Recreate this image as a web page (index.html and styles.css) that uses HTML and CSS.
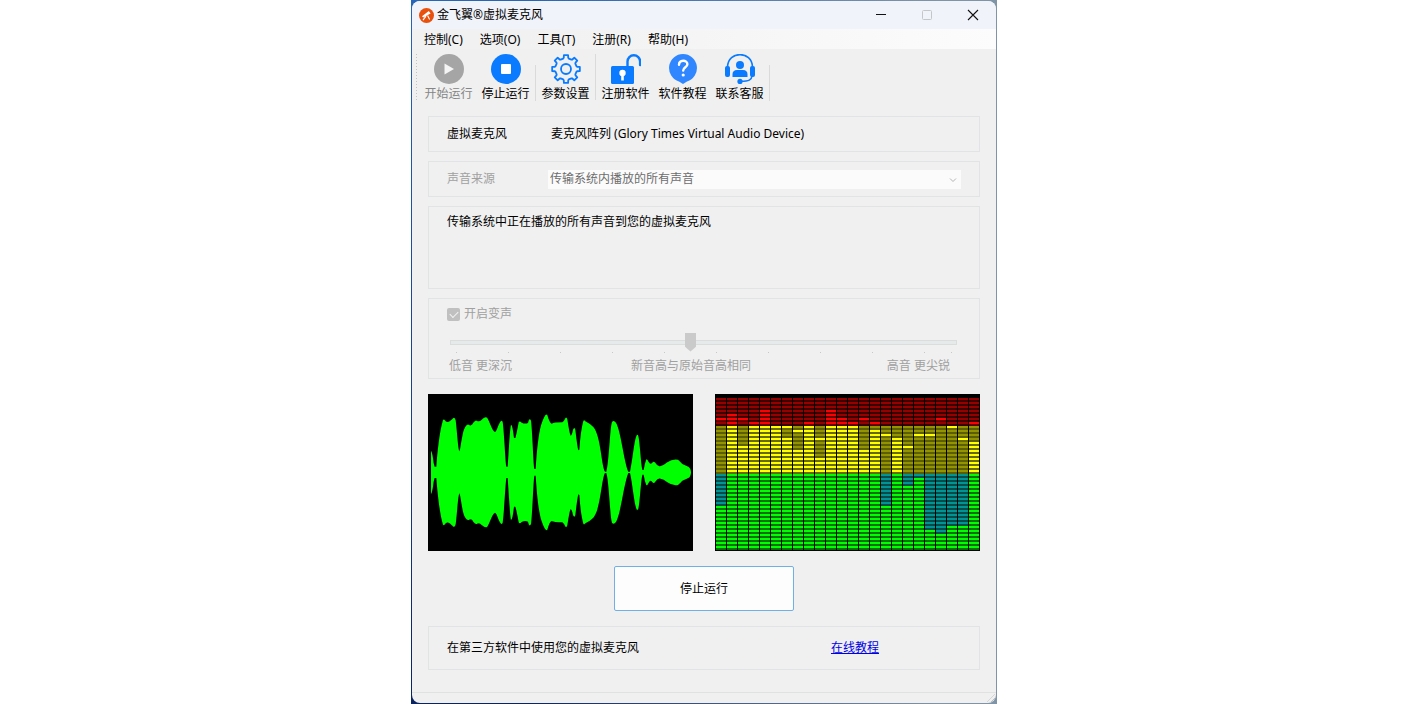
FILE: index.html
```html
<!DOCTYPE html>
<html lang="zh-CN">
<head>
    <meta charset="UTF-8">
    <meta name="viewport" content="width=device-width, initial-scale=1.0">
    <title>金飞翼®虚拟麦克风</title>
    <link rel="stylesheet" href="styles.css">
</head>
<body>
    <div class="desktop">
        <div class="window">
            <header class="title-bar">
                <svg class="app-icon" viewBox="0 0 15 15" aria-hidden="true">
                    <circle cx="7.5" cy="7.5" r="7.5" fill="#e8500c"/>
                    <path d="M3 8.200 9.800 3l1.800 2.600L4.200 9.400z" fill="#fff"/>
                    <path d="M7 8.200 4 12.200M8.600 7.400l2 4" stroke="#fff" stroke-width="1.1" fill="none"/>
                </svg>
                <h1>金飞翼®虚拟麦克风</h1>
                <div class="window-controls">
                    <button type="button" aria-label="最小化">
                        <svg viewBox="0 0 12 12"><path d="M1 5.500h10" stroke="#111"/></svg>
                    </button>
                    <button type="button" aria-label="最大化" disabled>
                        <svg viewBox="0 0 12 12"><rect x="1.5" y="1.5" width="9" height="9" rx="1" fill="none" stroke="#c4c6ca"/></svg>
                    </button>
                    <button type="button" aria-label="关闭">
                        <svg viewBox="0 0 12 12"><path d="M1 1l10 10M11 1 1 11" stroke="#111" stroke-width="1.1"/></svg>
                    </button>
                </div>
            </header>

            <nav class="menu-bar">
                <button type="button">控制(C)</button>
                <button type="button">选项(O)</button>
                <button type="button">工具(T)</button>
                <button type="button">注册(R)</button>
                <button type="button">帮助(H)</button>
            </nav>

            <div class="toolbar">
                <span class="grip"></span>
                <button type="button" disabled>
                    <svg viewBox="0 0 30 30">
                        <circle cx="15" cy="15" r="15" fill="#a5a5a5"/>
                        <path d="M10.5 9.5v11l9.5-5.5z" fill="#f4f4f4"/>
                    </svg>
                    开始运行
                </button>
                <button type="button">
                    <svg viewBox="0 0 30 30">
                        <circle cx="15" cy="15" r="15" fill="#0a7bff"/>
                        <rect x="10" y="10" width="10" height="10" rx="1" fill="#fff"/>
                    </svg>
                    停止运行
                </button>
                <span class="separator short"></span>
                <button type="button">
                    <svg viewBox="0 0 30 30" fill="none" stroke="#0a7bff" stroke-width="1.8">
                        <path id="gear" stroke-linejoin="round"/>
                        <circle cx="15" cy="15" r="5"/>
                    </svg>
                    参数设置
                </button>
                <span class="separator"></span>
                <button type="button">
                    <svg viewBox="0 0 30 30">
                        <rect x="0" y="12" width="23" height="18" rx="1.5" fill="#0a7bff"/>
                        <path d="M16.5 12V7.5a6.3 6.3 0 0 1 12.6 0V11" fill="none" stroke="#0a7bff" stroke-width="2.4" stroke-linecap="round"/>
                        <circle cx="11.5" cy="19" r="3.2" fill="#fff"/>
                        <path d="M10.2 20h2.6v6.5h-2.6z" fill="#fff"/>
                    </svg>
                    注册软件
                </button>
                <button type="button">
                    <svg viewBox="0 0 30 30">
                        <path d="M15 0a14 14 0 0 1 4 27.4L15 30l-4-2.6A14 14 0 0 1 15 0z" fill="#2f86ff"/>
                        <path d="M11 10.800c0-5.400 8.400-5.200 8.400-.6 0 3-4.200 3.200-4.200 6.400" fill="none" stroke="#fff" stroke-width="2.4" stroke-linecap="round"/>
                        <circle cx="15.2" cy="21" r="1.6" fill="#fff"/>
                    </svg>
                    软件教程
                </button>
                <button type="button">
                    <svg viewBox="0 0 30 30" fill="#0a7bff">
                        <path d="M2.500 13C3 -3.500 27 -3.500 27.500 13M27 22c-.5 4-3 5.300-11 5.300" fill="none" stroke="#0a7bff" stroke-width="1.600"/>
                        <rect x="0" y="12" width="5" height="11" rx="2"/>
                        <rect x="25" y="12" width="5" height="11" rx="2"/>
                        <circle cx="15" cy="11" r="4"/>
                        <path d="M7.500 23v-2.500q0-4.500 4.500-4.500h6q4.500 0 4.500 4.500V23z"/>
                        <circle cx="15" cy="27.400" r="2.600"/>
                    </svg>
                    联系客服
                </button>
                <span class="separator short"></span>
            </div>

            <main class="content">
                <section class="group row">
                    <span class="row-label">虚拟麦克风</span>
                    <span class="device">麦克风阵列 (Glory Times Virtual Audio Device)</span>
                </section>

                <section class="group row">
                    <label class="row-label muted" for="source">声音来源</label>
                    <div class="select-wrap">
                        <select id="source" disabled>
                            <option>传输系统内播放的所有声音</option>
                        </select>
                        <svg class="chevron" viewBox="0 0 8 8"><path d="M1 2.500l3 3 3-3" fill="none" stroke="#b4b4b4"/></svg>
                    </div>
                </section>

                <section class="group description">
                    <p>传输系统中正在播放的所有声音到您的虚拟麦克风</p>
                </section>

                <section class="group pitch">
                    <label class="check">
                        <input type="checkbox" checked disabled>
                        开启变声
                    </label>
                    <input class="slider" type="range" min="0" max="19" value="9" disabled aria-label="音高">
                    <div class="ticks"></div>
                    <div class="pitch-labels">
                        <span>低音 更深沉</span>
                        <span>新音高与原始音高相同</span>
                        <span class="high">高音 更尖锐</span>
                    </div>
                </section>

                <section class="meters">
                    <svg class="meter" viewBox="12 11 795 471" preserveAspectRatio="none" role="img" aria-label="波形">
                        <path id="wave" fill="#0f0" d="M21 247V181Q25 185 29 218L32 229H37C40 190 46 125 57 89Q60 85 64 92 70 98 77 93L86 85Q92 78 95 90C99 120 102 175 106 183 110 178 114 130 121 115Q128 101 134 103 140 108 145 102 153 89 158 91 166 96 173 88 185 77 190 83C196 92 205 123 213 125Q217 124 222 108 232 83 236 95C240 120 244 210 247 229H251C254 190 258 110 261 104Q265 100 270 143H274Q278 130 284 96 287 90 293 97 303 102 312 98 316 80 321 91C325 120 328 220 331 236H335C338 190 343 130 352 102Q364 66 370 74 377 99 383 100 390 96 415 96 420 92 425 82 428 80 430 87 437 134 440 136 444 134 447 118 451 108 454 118 460 170 463 180L466 178Q470 120 478 92 480 87 484 93 498 100 508 110C530 135 532 225 543 244H547C555 220 558 110 564 95Q569 88 576 97C590 120 600 215 613 244H618C625 215 630 155 637 137Q640 130 643 137C648 160 650 215 655 239H659Q662 220 667 207 671 207 674 215 679 224 684 218 690 210 695 219 701 230 710 227 718 226 730 216 745 205 762 208 770 215 775 221L793 229Q801 233 801 247Z"/>
                        <use href="#wave" transform="matrix(1 0 0 -1 0 492)"/>
                    </svg>
                    <canvas class="meter" id="spectrum" width="265" height="157" role="img" aria-label="频谱"></canvas>
                </section>

                <button class="stop-btn" type="button">停止运行</button>

                <section class="group footer-row">
                    <span>在第三方软件中使用您的虚拟麦克风</span>
                    <a href="#">在线教程</a>
                </section>
            </main>

            <footer class="status-bar">
                <span class="resize-grip"></span>
            </footer>
        </div>
    </div>

    <script src="script.js"></script>
</body>
</html>
```
FILE: styles.css
```css
:root {
    --face: #f0f0f0;
    --line: #e1e3e4;
    --muted: #a0a0a0;
}

* {
    margin: 0;
    padding: 0;
    box-sizing: border-box;
}

body {
    font-family: 'Noto Sans', 'Noto Sans CJK SC', sans-serif;
    font-size: 12px;
    line-height: 18px;
    color: #000;
    background: #fff;
}

button,
select,
input {
    font: inherit;
    color: inherit;
    border: none;
    background: none;
}

/* strip of wallpaper showing round the window corners */
.desktop {
    max-width: 586px;
    min-height: 100vh;
    margin: 0 auto;
    padding: 1px;
    display: flex;
    background: linear-gradient(90deg, rgba(128, 148, 168, 0) 20%, #8094a8 90%), linear-gradient(#2766b4, #0b2460);
}

.window {
    flex: 1;
    display: flex;
    flex-direction: column;
    background: var(--face);
    border-radius: 8px;
    overflow: hidden;
}

.title-bar {
    display: flex;
    align-items: center;
    height: 28px;
    padding-left: 7px;
    background: #f0f3f9;
}

.app-icon {
    width: 15px;
    height: 15px;
    margin-right: 3px;
}

.title-bar h1 {
    font-size: 12px;
    font-weight: 400;
}

.window-controls {
    display: flex;
    margin-left: auto;
}

.window-controls button {
    width: 46px;
    height: 28px;
}

.window-controls svg {
    width: 12px;
    height: 12px;
    display: block;
    margin: 0 auto;
}

.menu-bar {
    display: flex;
    gap: 17px;
    height: 20px;
    padding: 2px 0 0 12px;
    background: linear-gradient(90deg, #f1f1f1 20%, #fcfcfc);
}

.toolbar {
    display: flex;
    height: 55px;
    padding-top: 5px;
}

.grip {
    width: 8px;
    height: 46px;
    background: repeating-linear-gradient(#c4c4c4 0 1px, transparent 1px 3px) 4px 0 / 1px 100% no-repeat;
}

.toolbar button {
    width: 57px;
    display: flex;
    flex-direction: column;
    align-items: center;
    gap: 1px;
    white-space: nowrap;
}

.toolbar button:disabled {
    color: #858585;
}

.toolbar svg {
    width: 30px;
    height: 30px;
}

.separator {
    width: 3px;
    height: 46px;
    background: linear-gradient(#dadada, #dadada) 1px 0 / 1px 100% no-repeat;
}

.separator.short {
    height: 36px;
    margin-top: 11px;
}

.content {
    flex: 1;
    display: flex;
    flex-direction: column;
    gap: 9px;
    padding: 12px 16px 0;
}

.group {
    border: 1px solid var(--line);
    padding: 0 18px;
}

.row {
    display: flex;
    align-items: center;
    height: 36px;
}

.row-label {
    width: 101px;
}

.device {
    padding-left: 3px;
}

.muted {
    color: var(--muted);
}

.select-wrap {
    flex: 1;
    position: relative;
}

.select-wrap select {
    display: block;
    width: 100%;
    height: 19px;
    padding-left: 2px;
    appearance: none;
    background: #fbfbfb;
    color: #6d6d6d;
    opacity: 1;
}

.chevron {
    position: absolute;
    right: 4px;
    top: 6px;
    width: 8px;
    height: 8px;
}

.description {
    min-height: 83px;
    padding-top: 6px;
}

.pitch {
    min-height: 81px;
    padding-top: 6px;
    color: var(--muted);
}

.check {
    display: flex;
    align-items: center;
    gap: 4px;
}

.check input {
    appearance: none;
    width: 13px;
    height: 13px;
    border-radius: 2px;
    background: #c0c0c0;
    display: grid;
    place-items: center;
}

.check input::before {
    content: "";
    width: 7px;
    height: 4px;
    margin-bottom: 2px;
    border: solid #f4f4f4;
    border-width: 0 0 1px 1px;
    transform: rotate(-45deg);
}

.slider {
    appearance: none;
    display: block;
    width: calc(100% - 7px);
    height: 20px;
    margin: 9px 4px 0 3px;
}

.slider::-webkit-slider-runnable-track {
    height: 5px;
    border: 1px solid #d9dddc;
    background: #e7eaea;
}

.slider::-webkit-slider-thumb {
    appearance: none;
    width: 11px;
    height: 19px;
    margin-top: -8px;
    background: #cacaca;
    clip-path: polygon(0 0, 100% 0, 100% 75%, 50% 100%, 0 75%);
}

.ticks {
    height: 1px;
    margin: 0 9px;
    background:
        linear-gradient(#c8c8c8, #c8c8c8) right / 1px 1px no-repeat,
        linear-gradient(90deg, #c8c8c8 1px, transparent 1px) 0 0 / 52px 1px;
}

.pitch-labels {
    display: flex;
    justify-content: space-between;
    margin: 4px 11px 0 2px;
}

.pitch-labels .high {
    width: 80px;
    text-align: right;
}

.meters {
    display: grid;
    grid-template-columns: 1fr 1fr;
    gap: 22px;
    margin-top: 6px;
}

.meter {
    display: block;
    width: 100%;
    aspect-ratio: 265 / 157;
    background: #000;
}

.stop-btn {
    align-self: center;
    width: 180px;
    height: 45px;
    margin-top: 6px;
    border: 1px solid #6fb1e4;
    border-radius: 2px;
    background: #fdfdfd;
}

.footer-row {
    display: flex;
    align-items: center;
    justify-content: space-between;
    height: 44px;
    margin-top: 6px;
    padding-right: 100px;
}

.footer-row a {
    color: #0000e6;
}

.status-bar {
    display: flex;
    justify-content: flex-end;
    align-items: flex-end;
    height: 11px;
    padding: 1px;
    border-top: 1px solid #e0e2e2;
}

.resize-grip {
    width: 8px;
    height: 8px;
    background: repeating-linear-gradient(135deg, transparent 0 2px, #bdbdbd 2px 3px);
    clip-path: polygon(100% 0, 100% 100%, 0 100%);
}
```
FILE: script.js
```js
// spectrum: rows counted from the top, [first lit row, peak row]
const ROWS = 38;
const RED_ROWS = 7;
const YELLOW_ROWS = 12;
const bars = [
    [27, 5], [4, 4], [12, 5], [6, 6], [3, 3], [7, 7], [10, 7], [13, 8],
    [6, 6], [15, 10], [3, 3], [5, 5], [6, 6], [13, 5], [8, 6], [27, 9],
    [10, 10], [22, 12], [20, 9], [33, 9], [34, 5], [32, 7], [32, 10], [11, 6]
];

// [bright, gap] pairs for lit and unlit cells
const colors = {
    red: { on: ['#ff0000', '#600000'], off: ['#980000', '#380000'] },
    yellow: { on: ['#ffff00', '#686800'], off: ['#949400', '#5c5c00'] },
    green: { on: ['#00ff00', '#007000'], off: ['#009494', '#004a4a'] }
};

function drawSpectrum() {
    const ctx = document.getElementById('spectrum').getContext('2d');
    ctx.fillStyle = '#000';
    ctx.fillRect(0, 0, 265, 157);

    bars.forEach(([level, peak], col) => {
        for (let row = 0; row < ROWS; row++) {
            let zone = 'green';
            if (row < RED_ROWS) zone = 'red';
            else if (row < RED_ROWS + YELLOW_ROWS) zone = 'yellow';

            const lit = row >= level || row === peak;
            const [bright, gap] = colors[zone][lit ? 'on' : 'off'];
            const x = 1 + col * 11;
            const y = 4 + row * 4;
            ctx.fillStyle = gap;
            ctx.fillRect(x, y, 10, 4);
            ctx.fillStyle = bright;
            ctx.fillRect(x, y, 10, 2);
        }
    });
}

// gear outline for the settings icon
function drawGear() {
    const points = [];
    for (let i = 0; i < 8; i++) {
        const a = i * Math.PI / 4;
        [[-0.26, 10.8], [-0.2, 11.4], [-0.15, 14], [0.15, 14], [0.2, 11.4], [0.26, 10.8]].forEach(([d, r]) => {
            points.push((15 + r * Math.sin(a + d)).toFixed(2) + ' ' + (15 - r * Math.cos(a + d)).toFixed(2));
        });
    }
    document.getElementById('gear').setAttribute('d', 'M' + points.join('L') + 'Z');
}

drawSpectrum();
drawGear();
```
